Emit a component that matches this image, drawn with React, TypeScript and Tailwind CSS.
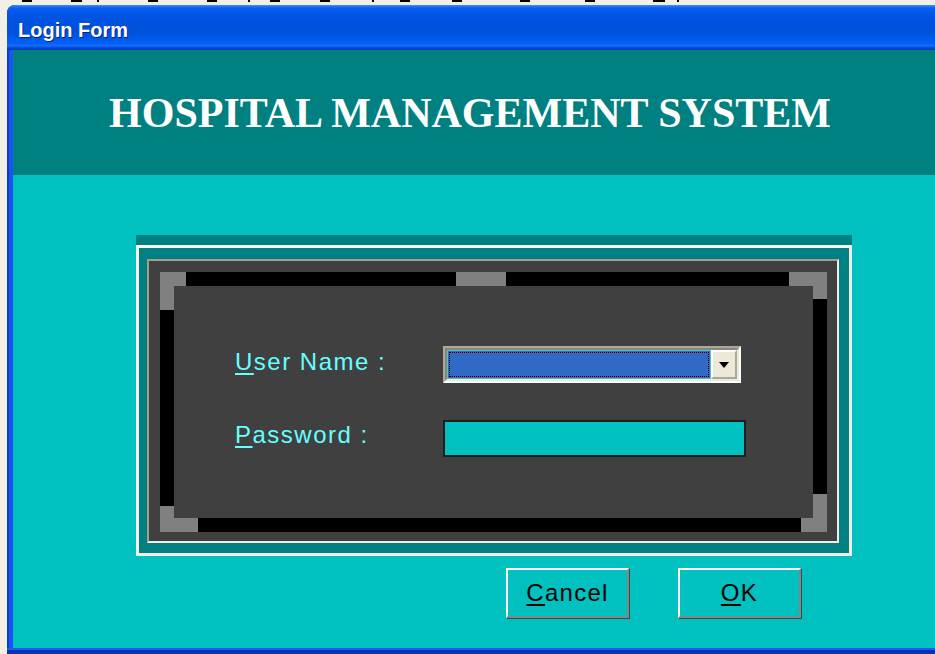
import React from "react";

// leftovers of whatever sat above the window: tiny black dashes on the desktop strip
const marks = [
  { x: 22, w: 10 },
  { x: 71, w: 11 },
  { x: 97, w: 2 },
  { x: 148, w: 10 },
  { x: 207, w: 10 },
  { x: 248, w: 2 },
  { x: 270, w: 10 },
  { x: 320, w: 10 },
  { x: 372, w: 2 },
  { x: 400, w: 10 },
  { x: 452, w: 10 },
  { x: 520, w: 10 },
  { x: 585, w: 10 },
  { x: 653, w: 12 },
  { x: 677, w: 2 },
];

const TopStrip = () => (
  <div className="relative h-[5px] shrink-0 bg-[#f1efe6]">
    {marks.map((m) => (
      <span
        key={m.x}
        className="absolute top-0 h-[2px] bg-black"
        style={{ left: m.x, width: m.w }}
      />
    ))}
  </div>
);

const TitleBar = () => (
  <div className="flex h-[45px] shrink-0 items-center bg-[linear-gradient(to_bottom,#3d8cf8_0px,#0a5ef0_3px,#0055e3_10px,#0051da_28px,#0060f6_38px,#1a6cf8_41px,#0046d4_43px,#0036b8_45px)] pl-[11px] pt-[5px]">
    <span className="font-['Liberation_Sans',Arial,sans-serif] text-[20px] font-bold text-white [text-shadow:1px_1px_0_#0a1e8c]">
      Login Form
    </span>
  </div>
);

const Label = ({ first, rest }: { first: string; rest: string }) => (
  <span className="font-['Liberation_Sans',Arial,sans-serif] text-[24px] leading-none tracking-[1.5px] text-[#66ffff]">
    <span className="underline decoration-2 underline-offset-[3px]">{first}</span>
    {rest}
  </span>
);

const UserCombo = () => (
  <div className="flex h-[37px] w-[298px] border-2 border-t-[#aca899] border-l-[#aca899] border-b-white border-r-white bg-white">
    <div className="flex flex-1 border-2 border-t-[#8a877a] border-l-[#8a877a] border-b-[#ece9d8] border-r-[#ece9d8]">
      <div className="flex-1 border border-[#49c6c6] bg-[#316ac5] p-[1px]">
        <div className="h-full w-full border border-dotted border-black" />
      </div>
      <div className="flex w-[26px] items-center justify-center border-2 border-t-white border-l-white border-b-[#aca899] border-r-[#aca899] bg-[#ece9d8]">
        <svg width="10" height="6" viewBox="0 0 10 6">
          <path d="M0 0h10L5 6z" fill="#000" />
        </svg>
      </div>
    </div>
  </div>
);

const PasswordBox = () => (
  <div className="h-[37px] w-[303px] border-2 border-[#1c1c1c] bg-[#00c0c0]" />
);

// grey corner pieces sitting on the black border
const Corners = () => (
  <>
    <span className="absolute left-0 top-0 h-[14px] w-[26px] bg-[#808080]" />
    <span className="absolute left-0 top-0 h-[38px] w-[14px] bg-[#808080]" />
    <span className="absolute left-[296px] top-0 h-[14px] w-[50px] bg-[#808080]" />
    <span className="absolute right-0 top-0 h-[14px] w-[38px] bg-[#808080]" />
    <span className="absolute right-0 top-0 h-[27px] w-[14px] bg-[#808080]" />
    <span className="absolute bottom-0 left-0 h-[26px] w-[14px] bg-[#808080]" />
    <span className="absolute bottom-0 left-0 h-[14px] w-[38px] bg-[#808080]" />
    <span className="absolute bottom-0 right-0 h-[38px] w-[14px] bg-[#808080]" />
    <span className="absolute bottom-0 right-0 h-[14px] w-[26px] bg-[#808080]" />
  </>
);

const Button = ({ first, rest }: { first: string; rest: string }) => (
  <button className="flex h-[50px] w-[123px] items-center justify-center border-2 border-t-white border-l-white border-b-[#7a8a8a] border-r-[#7a8a8a] bg-[#00c0c0] font-['Liberation_Sans',Arial,sans-serif] text-[24px] leading-none tracking-[1.3px] text-black shadow-[1px_1px_0_#3c4a4a]">
    <span className="underline decoration-2 underline-offset-[3px]">{first}</span>
    {rest}
  </button>
);

const LoginPanel = () => (
  <div className="ml-[123px] mt-[60px] w-[716px] bg-[#008080] pt-[10px]">
    <div className="flex border-[3px] border-t-[#f6f5ef] border-l-[#f6f5ef] border-b-[#eeede6] border-r-[#eeede6] bg-[#008080] pb-[10px] pl-[8px] pr-[10px] pt-[11px]">
      <div className="flex-1 border-2 border-t-[#a29e90] border-l-[#a29e90] border-b-[#f2f0e2] border-r-[#f2f0e2] bg-[#404040] pb-[9px] pl-[11px] pr-[10px] pt-[11px]">
        <div className="relative h-[260px] bg-black p-[14px]">
          <Corners />
          <div className="h-full bg-[#404040] pl-[61px] pt-[60px]">
            <div className="grid grid-cols-[208px_auto] items-center gap-y-[37px]">
              <div className="pb-[4px]">
                <Label first="U" rest="ser Name :" />
              </div>
              <UserCombo />
              <div className="pb-[5px]">
                <Label first="P" rest="assword :" />
              </div>
              <PasswordBox />
            </div>
          </div>
        </div>
      </div>
    </div>
  </div>
);

export default function App() {
  return (
    <div className="flex h-[654px] w-[935px] flex-col overflow-hidden bg-[#f1efe6]">
      <TopStrip />
      <div className="ml-[7px] flex flex-1 flex-col overflow-hidden rounded-tl-[8px] bg-[#0831d9]">
        <TitleBar />
        <div className="flex flex-1">
          <div className="w-[6px] bg-[linear-gradient(to_right,#0a3ad8_0px,#0a3ad8_2px,#1a55ee_2px)]" />
          <div className="flex flex-1 flex-col">
            <div className="flex h-[125px] items-center justify-center bg-[#008080] pr-[8px]">
              <h1 className="font-['Liberation_Serif','Times_New_Roman',serif] text-[42px] font-bold leading-none text-white">
                HOSPITAL MANAGEMENT SYSTEM
              </h1>
            </div>
            <div className="flex-1 bg-[#00c0c0]">
              <LoginPanel />
              <div className="ml-[493px] mt-[12px] flex gap-[49px]">
                <Button first="C" rest="ancel" />
                <Button first="O" rest="K" />
              </div>
            </div>
          </div>
        </div>
        <div className="h-[6px] shrink-0 bg-[linear-gradient(to_bottom,#1a60f0_0px,#1a60f0_2px,#0a2fb8_2px)]" />
      </div>
    </div>
  );
}
